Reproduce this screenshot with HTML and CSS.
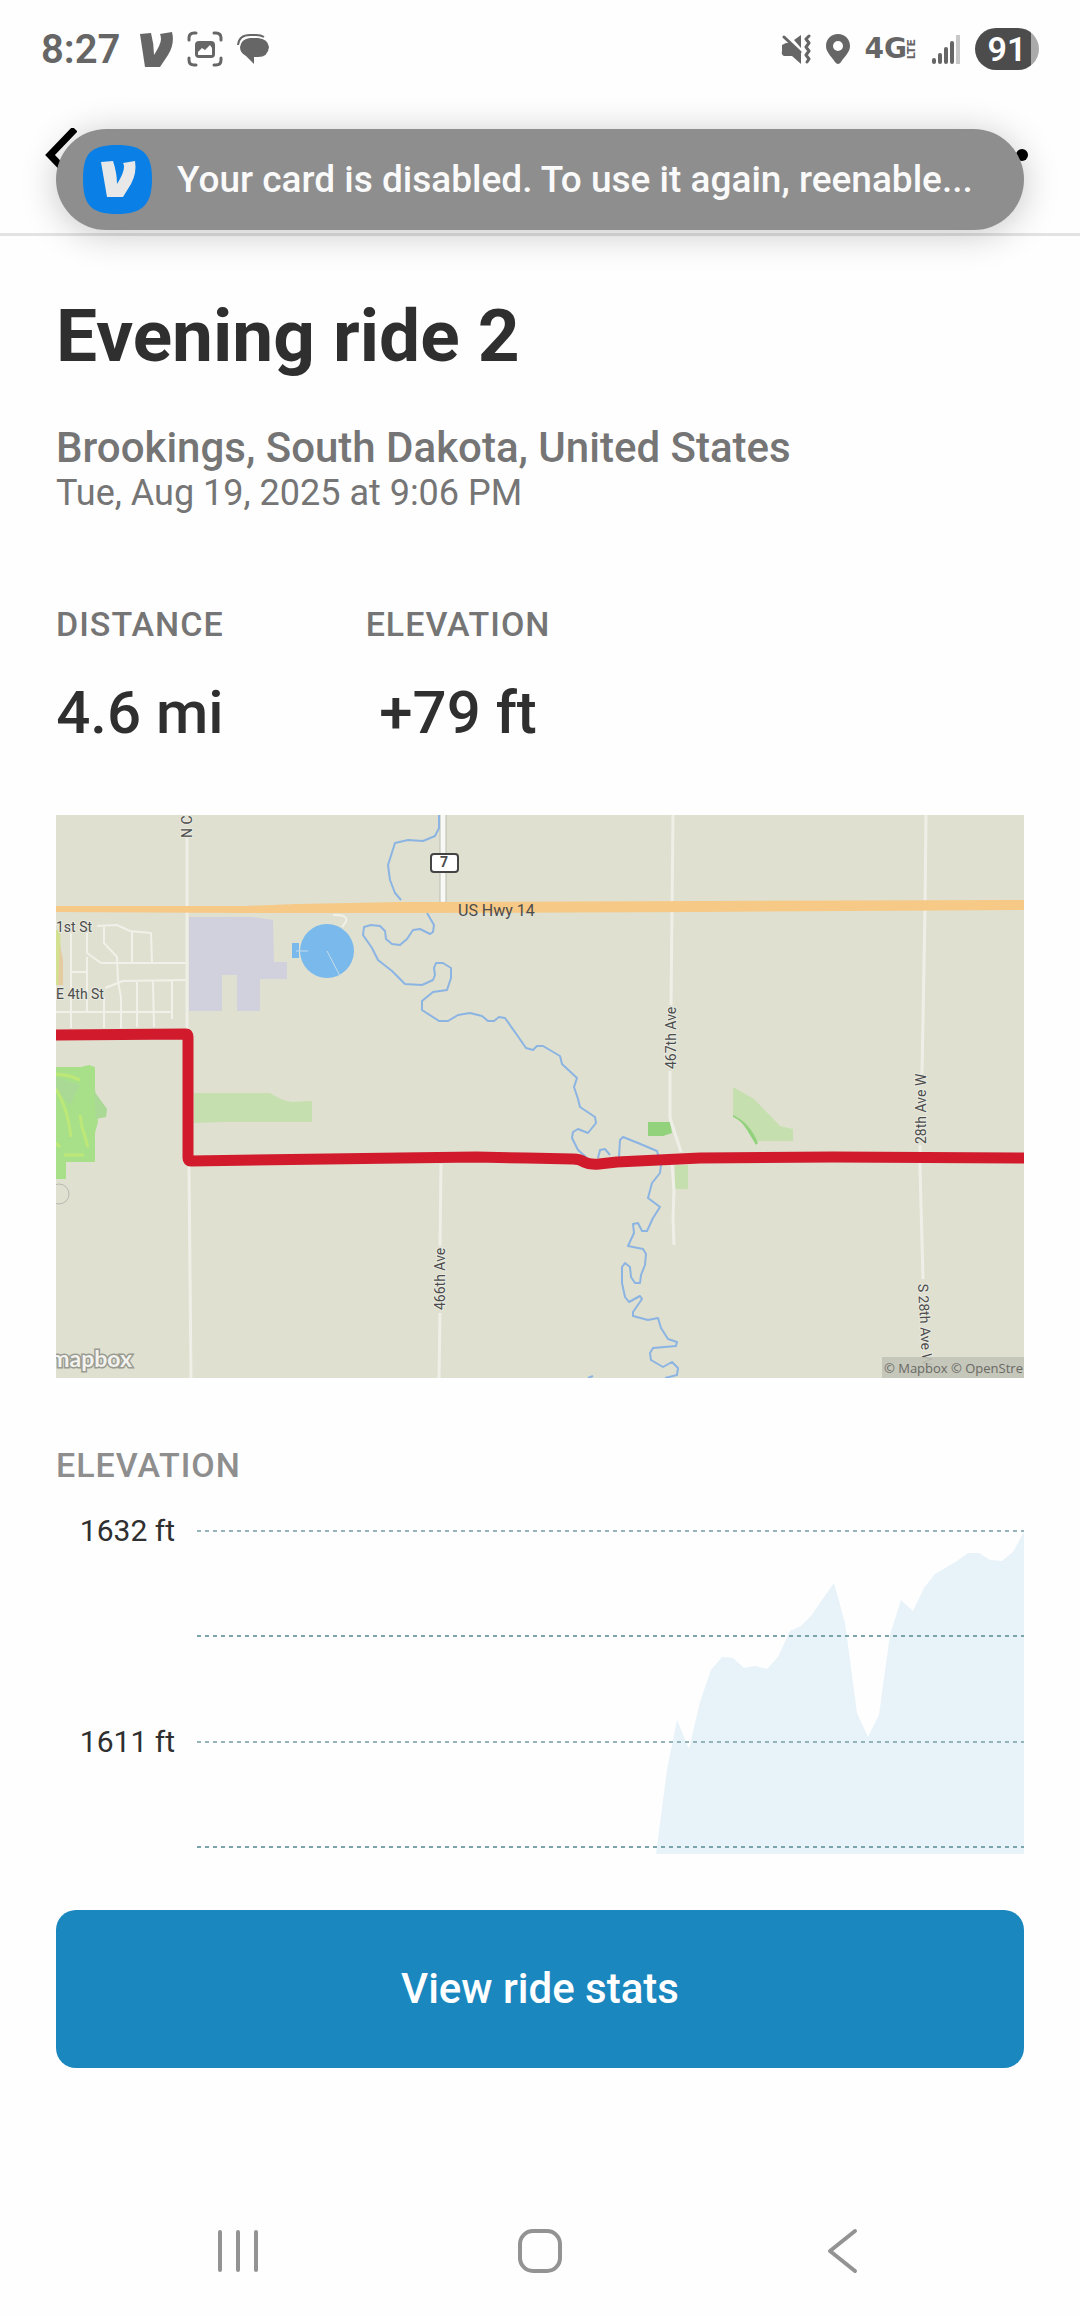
FILE: index.html
```html
<!DOCTYPE html>
<html lang="en">
<head>
    <meta charset="UTF-8">
    <meta name="viewport" content="width=device-width, initial-scale=1.0">
    <title>Evening ride 2</title>
    <link rel="stylesheet" href="styles.css">
</head>
<body>
    <div class="status-bar">
        <div class="status-left">
            <span class="clock">8:27</span>
            <svg class="icon-pay" width="33" height="35" viewBox="0 0 33 35">
                <path fill="#666" d="M0 2L11 1Q14 12 14 23Q21 12 21 7Q21 4 20 2L32 0Q35 12 28 23L20 35H5z"/>
            </svg>
            <svg class="icon-capture" width="36" height="36" viewBox="0 0 36 36">
                <path fill="none" stroke="#666" stroke-width="3" stroke-linecap="round" d="M2 9V7q0-5 5-5h2M27 2h2q5 0 5 5v2M34 27v2q0 5-5 5h-2M9 34H7q-5 0-5-5v-2"/>
                <rect x="8" y="10" width="20" height="17" rx="4" fill="#666"/>
                <path fill="#fff" d="M11 24v-3l4-4 3 2 5-5 2 3v7z"/>
            </svg>
            <svg class="icon-chat" width="32" height="30" viewBox="0 0 32 30">
                <path fill="none" stroke="#666" stroke-width="2" d="M1 11Q2 1 13 1h6q5 0 8 2"/>
                <path fill="#666" d="M13 4h8q10 1 11 9-1 10-11 10h-4v7l-8-8q-6-3-6-9 1-8 10-9z"/>
            </svg>
        </div>
        <div class="status-right">
            <svg width="30" height="30" viewBox="0 0 30 30">
                <path fill="#666" d="M1 11l4-2h4l11 10v11l-9-8H3q-3-1-2-5zM13 6l7-5v13z"/>
                <path fill="none" stroke="#666" stroke-width="3" stroke-linecap="round" stroke-linejoin="round" d="M3 3l16 15M28 2l-3 3 3 4-3 4 3 4-3 4 3 4-2 3"/>
            </svg>
            <svg width="24" height="30" viewBox="0 0 24 30">
                <path fill="#666" fill-rule="evenodd" d="M12 0c7 0 12 5 12 12 0 6-5 10-9 16q-3 4-6 0C5 22 0 18 0 12 0 5 5 0 12 0zm0 7a5 5 0 1 0 0 10 5 5 0 0 0 0-10z"/>
            </svg>
            <div class="network"><span>4G</span><span class="lte">LTE</span></div>
            <svg width="28" height="30" viewBox="0 0 28 30">
                <path fill="none" stroke="#666" stroke-width="4" stroke-linecap="round" d="M2 26v2M8 21v7M14 15v13M20 9v19"/>
                <path fill="none" stroke="#c8c8c8" stroke-width="4" d="M26 1v29"/>
            </svg>
            <div class="battery">91</div>
        </div>
    </div>

    <header class="top-bar">
        <button class="back" aria-label="Back">
            <svg width="32" height="54" viewBox="0 0 32 54">
                <path fill="none" stroke="#000" stroke-width="7" d="M30 1L5 27l25 26"/>
            </svg>
        </button>
        <button class="more" aria-label="More">
            <svg width="50" height="12" viewBox="0 0 50 12">
                <circle cx="6" cy="6" r="6"/>
                <circle cx="25" cy="6" r="6"/>
                <circle cx="44" cy="6" r="6"/>
            </svg>
        </button>
    </header>

    <!-- Notification -->
    <div class="notification" role="alert">
        <svg class="app-icon" width="69" height="69" viewBox="0 0 69 69">
            <path fill="#0a80e6" d="M34 0c26 0 35 9 35 34S60 69 34 69 0 60 0 34 8 0 34 0z"/>
            <path fill="#e8e8e8" d="M18 17L30 16Q34 28 34 39Q41 28 41 22Q41 19 40 18L52 16Q54 28 48 39L40 52H24z"/>
        </svg>
        <span class="notification-text">Your card is disabled. To use it again, reenable...</span>
    </div>

    <main>
        <h1>Evening ride 2</h1>
        <p class="location">Brookings, South Dakota, United States</p>
        <p class="date">Tue, Aug 19, 2025 at 9:06 PM</p>

        <div class="stats">
            <div class="stat">
                <span class="label">DISTANCE</span>
                <span class="value">4.6 mi</span>
            </div>
            <div class="stat">
                <span class="label">ELEVATION</span>
                <span class="value">+79 ft</span>
            </div>
        </div>

        <!-- Route map -->
        <svg class="map" viewBox="0 0 968 563">
            <rect width="968" height="563" fill="#dfe0d0"/>

            <!-- Parks and land -->
            <path fill="#a8e08a" d="M0 252h25l8-2 6 2v22l3 33-3 11v29H10v17H0z"/>
            <path fill="#a9d995" d="M0 262l24 8-10 20L0 274zM38 276l13 18-1 8-10 2z"/>
            <path class="fairway" d="M0 259l14 2 10 4M0 274q12 20 15 48M24 300l2 12 6 20M8 340h20M0 328l4 4"/>
            <path fill="#c5dfae" d="M138 278h76q12 8 22 9l20-1v21h-89l-29 1zM619 350h13v24h-13zM677 272l21 12 26 27 13 3v12h-36q-8-18-24-25z"/>
            <path fill="#92d27c" d="M592 307h22l2 11-9 3h-15zM677 300q17 8 25 28l-2 2-9-15q-6-10-14-13z"/>
            <path fill="#d3e08f" d="M0 115h4l1 30-1 25H0z"/>
            <path fill="#e5cba0" d="M4 130l3 15v25H2z"/>
            <path fill="#d1d1de" d="M133 102h63l21 3 1 42h13v17h-27v32h-23v-36h-15v36h-33z"/>
            <circle cx="3" cy="379" r="10" fill="none" stroke="#b9bab0"/>

            <!-- Roads -->
            <path class="street" d="M15 118v95M31 118v20l14 10h86M31 142v55M41 111l20-1 13 6 21 2 1 30M48 112v16l13 14 1 25 3 15v31M76 117v31M15 157h16M131 165l-64 1-18 7M48 182v31M81 166v46M97 166l1 46M116 166v38M0 197h116M277 100q21-1 9 12"/>
            <path class="road" d="M131 22v192M133 352l2 211M617 0l-2 190M614 256v47l11 34M616 350l2 25-1 27 1 28M870 0l-1 95-3 164M864 330v22l3 112M385 349l-1 82M384 498l-1 65"/>
            <path d="M387 0v88" stroke="#bcbcb4" stroke-width="7"/>
            <path d="M387 0v88" stroke="#f8f8f4" stroke-width="5"/>

            <!-- Water -->
            <circle cx="271" cy="136" r="27" fill="#7ab9ec"/>
            <path fill="#7ab9ec" d="M236 128h7v15h-7z"/>
            <path fill="none" stroke="#c3dcea" d="M240 136h12M271 136l13 25"/>
            <path class="river" d="M383 0v13l-4 8-12 5-15-1-13 3-7 22 2 15 5 13 6 7M371 98l7 12-1 7-3 2-10-5-7 1-6 9-7 6-8-1-6-5-1-8-5-5-9-1-7 2-1 8 9 13 6 12 14 11 13 13 17 1 11-5 2-5-1-7 2-5h7l8 5v10l-4 12-14 2-11 9v9l17 11h9l10-6 12-2 12 3 6 5h6l5-4 6 1 12 17 9 13 7 2 4-4h6l17 10 2 8 15 14-3 9 4 12 2 8 15 10 1 6-8 10-10-4-5 3-1 6 6 12 9 8M542 343l2-8 5-1 5 6M563 342l1-17 3-3 15 6 19 8 4 14-1 8-8 10-4 15 12 9-7 11-6 13h-5l-4-8-5 1 1 9-6 13 15 3 3 5-1 11-4 10-1 8h-5l-4-6-1-10-5-4-3 4v16l3 14 4 5 11-6 2 3-9 13v4l15 4 10-2 3 10 7 11 9 3-1 4-23 2-3 5 1 7 12 7 9-5 6 6-1 7-12 3M532 563l5-2"/>

            <path fill="#f6c987" d="M0 91h190l50-2 104-2 300-1 324-1v10l-324 2-300 1H190L0 97z"/>
            <rect x="375" y="39" width="27" height="18" rx="3" fill="#fff" stroke="#444" stroke-width="2"/>

            <path class="route" d="M-6 220L130 219Q132 219 132 222V343Q132 346 135 346L344 343L420 342L471 343L517 344Q524 344 528 347Q534 350 543 349L561 347L644 343L777 342L974 343"/>

            <g class="map-labels">
                <text x="388" y="52" class="shield" text-anchor="middle">7</text>
                <text x="402" y="101" class="highway">US Hwy 14</text>
                <text x="0" y="117">1st St</text>
                <text x="0" y="184">E 4th St</text>
                <text transform="translate(136 23) rotate(-90)">N C</text>
                <text transform="translate(620 254) rotate(-90)">467th Ave</text>
                <text transform="translate(389 495) rotate(-90)">466th Ave</text>
                <text transform="translate(870 329) rotate(-90)">28th Ave W</text>
                <text transform="translate(862 469) rotate(87)">S 28th Ave W</text>
            </g>

            <text x="76" y="552" class="map-brand" text-anchor="end">mapbox</text>
            <rect x="826" y="542" width="142" height="21" fill="#c3c4b8" fill-opacity="0.9"/>
            <text x="828" y="558" class="map-credit">© Mapbox © OpenStre</text>
        </svg>

        <h2 class="label">ELEVATION</h2>
        <div class="chart">
            <div class="chart-labels">
                <span>1632 ft</span>
                <span>1611 ft</span>
            </div>
            <svg class="chart-plot" viewBox="0 0 827 324" preserveAspectRatio="none">
                <path fill="#e7f2f9" d="M459 324L470 240L480 190L492 219L503 172L514 140L525 127L536 128L547 138L558 136L570 139L581 127L593 101L604 96L614 86L625 70L637 53L648 93L660 183L671 207L682 185L693 105L704 70L716 81L727 58L738 44L750 37L760 31L771 23L782 23L793 30L805 31L816 22L827 2V324z"/>
                <path class="grid-line" d="M0 1h827M0 212h827"/>
                <path class="grid-line dark" d="M0 106h827M0 317h827"/>
            </svg>
        </div>

        <button class="view-stats">View ride stats</button>
    </main>

    <nav class="system-nav">
        <button aria-label="Recent apps">
            <svg width="48" height="48" viewBox="0 0 48 48"><path d="M6 5v38M24 5v38M42 5v38"/></svg>
        </button>
        <button aria-label="Home">
            <svg width="48" height="48" viewBox="0 0 48 48"><rect x="4" y="4" width="40" height="40" rx="13"/></svg>
        </button>
        <button aria-label="Back">
            <svg width="48" height="48" viewBox="0 0 48 48"><path d="M37 4L12 24l25 20"/></svg>
        </button>
    </nav>
</body>
</html>
```
FILE: styles.css
```css
/* General Styling */
* {
    box-sizing: border-box;
}

body {
    margin: 0;
    min-height: 100vh;
    display: flex;
    flex-direction: column;
    position: relative;
    background: #fefefe;
    color: #2f2f2f;
    font-family: Roboto, sans-serif;
}

button {
    padding: 0;
    border: none;
    background: none;
    font-family: inherit;
    cursor: pointer;
}

svg {
    display: block;
}

h1, h2, p {
    margin: 0;
}

/* Status Bar */
.status-bar {
    display: flex;
    justify-content: space-between;
    padding: 28px 41px 7px;
    color: #666;
}

.status-left,
.status-right {
    display: flex;
    align-items: center;
    height: 42px;
}

.status-left {
    gap: 14px;
}

.status-right {
    gap: 15px;
}

.clock {
    margin-right: 6px;
    font-size: 40px;
    font-weight: 600;
}

.network {
    display: flex;
    align-items: center;
    font-family: "DejaVu Sans", sans-serif;
    font-size: 28px;
    font-weight: bold;
    line-height: 30px;
}

.lte {
    writing-mode: vertical-rl;
    transform: rotate(180deg);
    font-size: 11px;
    line-height: 10px;
}

.battery {
    width: 64px;
    border-radius: 21px;
    background: linear-gradient(to right, #4c4c4c 88%, #aaa 88%);
    color: #fff;
    font-size: 34px;
    font-weight: 600;
    line-height: 42px;
    text-align: center;
}

/* Header */
.top-bar {
    display: flex;
    justify-content: space-between;
    align-items: center;
    height: 159px;
    padding: 0 52px 0 45px;
    border-bottom: 3px solid #e3e3e3;
}

/* Notification */
.notification {
    position: absolute;
    top: 129px;
    left: 56px;
    right: 56px;
    height: 101px;
    display: flex;
    align-items: center;
    gap: 25px;
    padding: 0 27px;
    border-radius: 51px;
    background: #8e8e8e;
    box-shadow: 0 4px 36px rgba(0, 0, 0, 0.22);
}

.app-icon {
    flex: none;
}

.notification-text {
    color: #fafafa;
    font-size: 37px;
    font-weight: 500;
    white-space: nowrap;
}

/* Ride Details */
main {
    padding: 58px 56px 0;
}

h1 {
    font-size: 73px;
    line-height: 84px;
}

.location {
    margin-top: 45px;
    color: #757575;
    font-size: 42px;
    font-weight: 500;
    line-height: 50px;
}

.date {
    color: #757575;
    font-size: 36px;
    line-height: 40px;
}

.stats {
    display: flex;
    gap: 142px;
    margin: 91px 0 66px;
}

.stat {
    display: flex;
    flex-direction: column;
    align-items: center;
    gap: 33px;
}

.label {
    color: #757575;
    font-size: 34px;
    font-weight: 500;
    line-height: 40px;
    letter-spacing: 1px;
}

.value {
    font-size: 60px;
    font-weight: 500;
    line-height: 72px;
}

/* Map */
.map {
    width: 100%;
    height: auto;
}

.street,
.road,
.river,
.route,
.fairway {
    fill: none;
    stroke-linejoin: round;
}

.street {
    stroke: #f1f1ea;
    stroke-width: 2;
}

.road {
    stroke: #efefe8;
    stroke-width: 3;
}

.river {
    stroke: #8bb4e3;
    stroke-width: 2;
}

.route {
    stroke: #d11b2d;
    stroke-width: 11;
}

.fairway {
    stroke: #bde878;
    stroke-width: 3;
}

.map-labels {
    fill: #4c4c4c;
    stroke: #e9eae0;
    stroke-width: 2px;
    paint-order: stroke;
    font-size: 14px;
}

.highway {
    stroke: none;
    font-size: 16px;
}

.shield {
    stroke: none;
    font-size: 14px;
    font-weight: bold;
}

.map-brand {
    fill: #f2f2ee;
    stroke: #999a90;
    stroke-width: 3px;
    paint-order: stroke;
    font-family: Lato, sans-serif;
    font-size: 23px;
    font-weight: bold;
}

.map-credit {
    fill: #686963;
    font-family: "Open Sans", sans-serif;
    font-size: 13px;
}

/* Elevation Chart */
h2.label {
    margin-top: 67px;
    color: #8e8e8e;
}

.chart {
    display: flex;
    gap: 22px;
    margin-top: 26px;
}

.chart-labels {
    display: flex;
    flex-direction: column;
    gap: 171px;
    width: 119px;
    font-size: 30px;
    line-height: 40px;
    text-align: right;
}

.chart-plot {
    flex: 1;
    min-width: 0;
    height: 324px;
    margin-top: 19px;
}

.grid-line {
    stroke: #95b4b9;
    stroke-width: 2;
    stroke-dasharray: 4 4;
}

.grid-line.dark {
    stroke: #7ba3aa;
}

.view-stats {
    width: 100%;
    margin-top: 56px;
    padding: 54px 0;
    border-radius: 20px;
    background: #1b87bf;
    color: #fff;
    font-size: 42px;
    font-weight: 500;
    line-height: 50px;
}

/* System Navigation */
.system-nav {
    display: flex;
    margin-top: auto;
    padding: 0 87px;
}

.system-nav button {
    flex: 1;
    display: flex;
    justify-content: center;
    align-items: center;
    height: 130px;
}

.system-nav svg {
    fill: none;
    stroke: #939393;
    stroke-width: 4;
    stroke-linecap: round;
    stroke-linejoin: round;
}
```
